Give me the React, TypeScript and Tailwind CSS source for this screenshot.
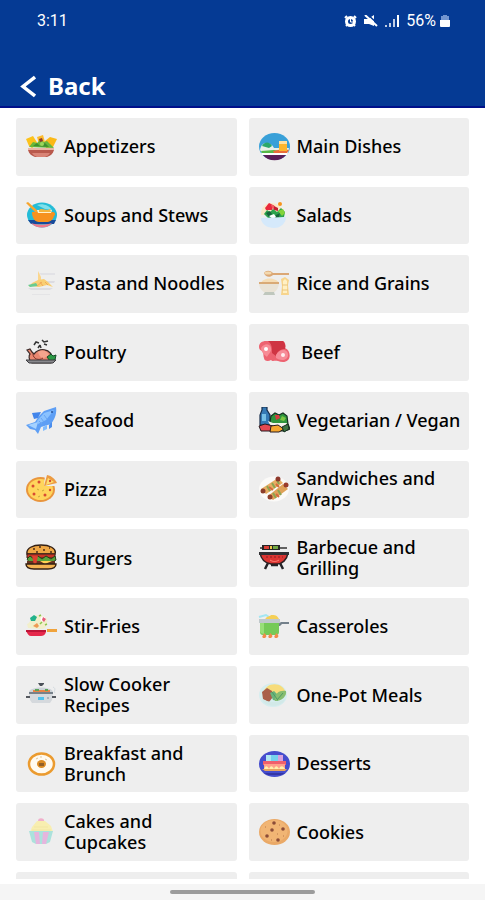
import React from "react";

interface Category {
    name: string;
    icon: React.ReactNode;
}

const CATEGORIES: Category[] = [
    {
        name: "Appetizers",
        icon: (
            <>
                <path d="M1 6l7-3 5 8-6 4-3-2z" fill="#fcc21b" />
                <path d="M12 4l6-2 2 7-6 2z" fill="#fdbb2d" />
                <path d="M20 8l5-4 7 2-4 8-7 1z" fill="#fbb917" />
                <path d="M4 14l4-5 4 1 3-3 4 2 3-1 3 3 4 4z" fill="#69b73c" />
                <path d="M8 13l4-3 3 3 5-3 4 4z" fill="#3f8f2f" />
                <path d="M14 6l3-1 1 3-3 1z" fill="#8c3b2e" />
                <circle cx="17" cy="11" r="2" fill="#9bd65c" />
                <path d="M3 15h26v2H3z" fill="#e9b7a4" />
                <path d="M3 17h26c-1 4-4 6-7 7H10c-3-1-6-3-7-7z" fill="#b9594c" />
                <path d="M7 20h18c-1 2-3 3-5 4h-8c-2-1-4-2-5-4z" fill="#d98476" />
            </>
        ),
    },
    {
        name: "Main Dishes",
        icon: (
            <>
                <ellipse cx="16.5" cy="13.5" rx="15.5" ry="13.5" fill="#39a0d8" />
                <path d="M2 17c1-5 3-6 5-7 4 0 7 1 9 5h15l-1 5H4z" fill="#e8efe8" />
                <path d="M4 13c3-5 8-4 10 0l-3 2z" fill="#2ba86a" />
                <path d="M3 18l13-1 6 1-3 2H4z" fill="#55b848" />
                <path d="M15 18l10-2 6 1-2 3H16z" fill="#ea6c3a" />
                <path d="M21 8h8v10h-8z" fill="#fdb62b" />
                <path d="M21 8h8v3h-8z" fill="#ffe1a0" />
                <path d="M3 20h27l-1 2H4z" fill="#fff" />
                <path d="M5 22h23c-5 7-18 7-23 0z" fill="#5b1e58" />
            </>
        ),
    },
    {
        name: "Soups and Stews",
        icon: (
            <>
                <ellipse cx="17" cy="14" rx="15" ry="12.5" fill="#24bcd7" />
                <path d="M12 4c5-2 12 0 15 5l-7-1z" fill="#7fe0ea" />
                <path d="M3 19h28l-2 4H6z" fill="#174b9b" />
                <path d="M6 22c6 2 15 2 21 0-4 6-16 6-21 0z" fill="#f2788a" />
                <path d="M1 2l2-1 10 9-2 2z" fill="#f7a52c" />
                <path d="M7 11h21c2 0 3 3 1 4-1 4-4 6-8 6h-7c-4 0-7-4-7-10z" fill="#f6921e" />
                <path d="M12 9h15l-1 3H13z" fill="#fff3cd" />
                <path d="M14 9c3-3 7 2 11-1l1 3H14z" fill="#f4b53c" />
            </>
        ),
    },
    {
        name: "Salads",
        icon: (
            <>
                <path d="M3 14c0-8 4-11 9-12 8 0 13 4 15 12z" fill="#fbe7c6" />
                <path d="M7 7l4-5 4 2-1 5H8z" fill="#e9283c" />
                <path d="M13 4h3l1 3-2 2z" fill="#f15a60" />
                <circle cx="22" cy="3" r="2" fill="#f7941d" />
                <path d="M16 5l4 2v3l-4-1z" fill="#c61f2f" />
                <path d="M6 13l3-4 3 2 3-3 4 3 4-4 4 4-1 5-7 2-9-1z" fill="#2ba24c" />
                <path d="M8 12l4-2 2 3-3 3zm10 2l4-2-1 4-4 1z" fill="#17623a" />
                <path d="M20 10l5-2 2 4-3 3z" fill="#83d33a" />
                <path d="M11 15l5-2 2 3-3 2z" fill="#fff" />
                <path d="M3 17l25-1c0 6-5 11-12 11S3 23 3 17z" fill="#d5e9fb" />
            </>
        ),
    },
    {
        name: "Pasta and Noodles",
        icon: (
            <>
                <path d="M14 3h16v2H16z" fill="#e2e2e6" />
                <path d="M18 11h12l-1 2H19z" fill="#dcdce2" />
                <path d="M3 18h25l-3 2H6z" fill="#dddde1" />
                <path d="M7 24h18v1H7z" fill="#e4e4e6" />
                <path d="M13 1l3 6v8h-3z" fill="#fbd68d" />
                <path d="M7 13l6-3 6-1 4 3 5 5-6-2-8 2-7-1-3 1z" fill="#f9cf74" />
                <path d="M3 15l8-2 2 3-8 1z" fill="#69cb91" />
                <path d="M15 12l3 4M20 12l3 3M12 16l5-4" stroke="#f2a95a" fill="none" />
            </>
        ),
    },
    {
        name: "Rice and Grains",
        icon: (
            <>
                <path d="M6 3c2-3 6-3 9 0h16v2H15c-3 3-8 2-9-2z" fill="#dba775" />
                <ellipse cx="10" cy="3" rx="3.5" ry="1.5" fill="#f3d8ae" />
                <path d="M3 13c2-6 15-6 18 0z" fill="#f5ddb5" />
                <path d="M1 12h20c0 6-3 10-7 11H8c-5-2-7-6-7-11z" fill="#e9e3d6" />
                <path d="M1 12h20v2H1z" fill="#d9aa76" />
                <path d="M7 22h9l1 3H5z" fill="#bfc7bd" />
                <path d="M23 9l4-2 4 3-1 5 1 10h-8l1-9z" fill="#f7d48c" />
                <path d="M25 11l2-2 2 2v12h-4z" fill="#fff0c4" />
                <path d="M24 15h6M24 20h6" stroke="#e9c47c" />
            </>
        ),
    },
    {
        name: "Poultry",
        icon: (
            <>
                <path d="M9 7l2-3 3 1m-1 5l2-3m2-5l2 2 4-1m-8 4l1 3m3-4l3 1" stroke="#333" strokeWidth="1.5" fill="none" />
                <path d="M2 12l3-1 2 3 2 2c5-6 17-7 19 6l-2 3H7c-4-3-3-8-2-9z" fill="#e98770" stroke="#3b2a28" strokeWidth="1.2" />
                <path d="M13 14c5-3 9-1 11 3l-5 3c-3 0-5-2-6-6z" fill="#f4a48d" />
                <path d="M8 16c0 5 6 7 10 4" stroke="#7f352b" fill="none" />
                <path d="M22 19l4-3 2 2 3-1-1 5-5 1z" fill="#2b9a45" stroke="#164d29" />
                <path d="M1 22h30l-3 3H4z" fill="#88888c" stroke="#3c3c40" />
            </>
        ),
    },
    {
        name: "\u00a0Beef",
        icon: (
            <>
                <path d="M1 9c0-4 3-6 7-6h17c2 1 3 4 2 7 5 2 6 9 3 12-3 3-7 2-10 1-4-1-5 1-7-1-3 2-7 1-7-2-1-3 0-5-2-7-2-1-3-2-3-4z" fill="#ed6371" />
                <path d="M10 3h15c2 2 3 5 2 8-5 0-7 2-9 7l-4-3c0-5 0-9-4-12z" fill="#cf3443" />
                <path d="M3 10c3-5 9-5 10 0 1 4-3 6-4 9-4-3-6-6-6-9z" fill="#f78b95" />
                <path d="M18 17c3-6 12-7 12 0 0 6-8 6-12 3z" fill="#f68c98" />
                <circle cx="8" cy="11" r="2" fill="#fff" />
                <circle cx="25" cy="17" r="2" fill="#ffecee" />
            </>
        ),
    },
    {
        name: "Seafood",
        icon: (
            <>
                <path d="M1 18l9-3 4-6 5-5 12-4c1 6-1 12-5 17l-10 3-3 7-3-4-5-1z" fill="#5e9ff5" />
                <path d="M7 6l9-1-3 6-4 1z" fill="#4285eb" />
                <path d="M18 20l4-2v4l-4 2z" fill="#80bcff" />
                <path d="M24 18l3-3v5l-3 2z" fill="#4b8eed" />
                <path d="M12 14l7-8 10-3-8 10-8 4z" fill="#8ac2ff" />
                <path d="M3 18l10-3-2 7z" fill="#a5d2ff" />
                <path d="M14 14l3 3m-1-6l3 4m0-7l3 4" stroke="#6aa5f0" fill="none" />
                <circle cx="27" cy="5" r="1" fill="#26539d" />
            </>
        ),
    },
    {
        name: "Vegetarian / Vegan",
        icon: (
            <>
                <path d="M4 0h5v3l3 5v10H2V8l2-5z" fill="#3479b5" stroke="#172e4b" strokeWidth="1.2" />
                <path d="M4 7h4v7H4z" fill="#76bfe6" />
                <path d="M12 15l1-6 4-3 4 2 4-2 4 3 1 8 2 5-5 2H13z" fill="#2e953c" stroke="#152f20" strokeWidth="1.2" />
                <path d="M17 8h4l1 3-4 2z" fill="#d63b40" />
                <path d="M24 9l4 2-2 3-4-1z" fill="#7cc642" />
                <path d="M10 14l5 2h14l-3 6H14z" fill="#f3f4ee" />
                <path d="M1 19l6-2 8 2v5H3z" fill="#e44951" stroke="#271b20" />
                <path d="M13 19l7-1 6 4-5 3h-9z" fill="#f5a72e" stroke="#271b20" />
                <path d="M24 20l6-3 1 5-5 3z" fill="#3c7544" stroke="#172e20" />
            </>
        ),
    },
    {
        name: "Pizza",
        icon: (
            <>
                <ellipse cx="15.5" cy="14.5" rx="14.5" ry="12.5" fill="#e9953d" />
                <ellipse cx="15.5" cy="14.5" rx="12.5" ry="10.5" fill="#ffd55c" />
                <path d="M19 11L20 0l12 2v9z" fill="#eee" />
                <path d="M22 0c5 1 8 4 10 8l-13 3z" fill="#ec9b42" />
                <path d="M23 3l6 4-8 3z" fill="#ffe170" />
                <g fill="#d94b32">
                    <circle cx="8" cy="11" r="1.5" />
                    <circle cx="14" cy="7" r="1.5" />
                    <circle cx="9" cy="19" r="1.5" />
                    <circle cx="20" cy="20" r="1.5" />
                    <circle cx="25" cy="6" r="1.2" />
                    <circle cx="25" cy="15" r="1.2" />
                </g>
                <path d="M12 14l2 1m3 1l2-1m-6 7l2-1" stroke="#c9a63d" />
            </>
        ),
    },
    {
        name: "Sandwiches and Wraps",
        icon: (
            <>
                <ellipse cx="16" cy="14" rx="15" ry="12.5" fill="#fbfaf8" />
                <path d="M3 14L20 3l5 5L8 19z" fill="#e7ad63" />
                <path d="M10 21L25 9l5 5-15 11z" fill="#dfa258" />
                <path d="M9 11l3 5m2-8l3 5m2-8l2 4m-6 9l3 5m2-8l3 5" stroke="#8ba552" strokeWidth="2" />
                <path d="M11 12l4 3m3-6l3 3m-3 7l3 3" stroke="#d46b3d" strokeWidth="2" />
                <circle cx="5" cy="16" r="2.5" fill="#8c3e2b" />
                <circle cx="20" cy="4" r="2.5" fill="#8e392c" />
                <circle cx="12" cy="22" r="2.5" fill="#8f402b" />
                <circle cx="28" cy="10" r="2.5" fill="#993b2b" />
            </>
        ),
    },
    {
        name: "Burgers",
        icon: (
            <>
                <path d="M2 10C1 4 8 1 16 1s16 3 14 9z" fill="#efa744" stroke="#332015" strokeWidth="1.4" />
                <path d="M8 5h2m4-2h2m2 3h2m4-2h1m0 4h2M11 8h2" stroke="#4b2d19" strokeWidth="1.5" />
                <path d="M2 10h28v4H2z" fill="#c83425" stroke="#3b211b" />
                <path d="M2 15l3-3 4 3 4-3 4 3 4-3 5 3 4-3 1 4-3 2H4z" fill="#59a33a" stroke="#213e1b" />
                <path d="M2 17h28v3H2z" fill="#66331f" />
                <path d="M7 12h6l-2 9H9z" fill="#dc3f2f" />
                <path d="M15 17h12l-7 3z" fill="#ffd153" />
                <path d="M1 20h30c0 4-4 5-8 5H9c-4 0-8-1-8-5z" fill="#f3b452" stroke="#332015" strokeWidth="1.4" />
            </>
        ),
    },
    {
        name: "Barbecue and Grilling",
        icon: (
            <>
                <path d="M2 4h27" stroke="#333" strokeWidth="1.5" />
                <path d="M4 1h18v5H4z" fill="#252525" />
                <path d="M6 2h5v3H6z" fill="#db3f36" />
                <path d="M12 2h2v3h-2z" fill="#edc849" />
                <path d="M15 2h5v3h-5z" fill="#71a844" />
                <path d="M10 19L7 25m15-6l3 6M13 21h7" stroke="#242428" strokeWidth="2.5" />
                <path d="M2 9h28c-1 7-6 11-11 11h-6C7 19 3 15 2 9z" fill="#db3532" stroke="#2d2022" strokeWidth="1.5" />
                <path d="M1 8h30v3H1z" fill="#303034" />
                <path d="M8 13h17" stroke="#8c1e24" strokeDasharray="2 2" />
                <path d="M12 16c3 2 6 2 9 0" stroke="#ff8175" fill="none" />
            </>
        ),
    },
    {
        name: "Stir-Fries",
        icon: (
            <>
                <path d="M2 11c4-1 3-6 7-8 5-2 11 0 13 3 1 5-1 10-6 10L3 15z" fill="#f2efcb" />
                <path d="M5 5l4-3 3 2-2 4H6z" fill="#22b28b" />
                <circle cx="18" cy="6" r="2.5" fill="#fff" />
                <path d="M18 4l3 2-2 3-2-2z" fill="#e65978" />
                <path d="M8 13l4-3 2 3-2 2z" fill="#ee9b55" />
                <path d="M14 3l2-1m-1 9l2-2m3 3l2-1" stroke="#8fc651" strokeWidth="1.5" />
                <path d="M1 17h20v2c-1 3-3 4-5 4H6c-2 0-4-2-5-6z" fill="#e5284b" />
                <path d="M1 17h20v2H1z" fill="#bd1538" />
                <path d="M22 16h10v3H22z" fill="#f0a33b" />
            </>
        ),
    },
    {
        name: "Casseroles",
        icon: (
            <>
                <path d="M1 4l7-2 3 2" stroke="#a3e6f2" strokeWidth="2" fill="none" />
                <path d="M7 7c1-4 4-3 6-5 4 0 6 0 8 4l1 3H7z" fill="#f5cf55" />
                <path d="M20 11l3-2h8v2h-7l-2 2h-2z" fill="#73808a" />
                <path d="M1 6h21v4H1z" fill="#bfc8cb" />
                <path d="M2 10h19v9c0 2-1 3-3 3H5c-2 0-3-1-3-3z" fill="#75ca57" />
                <path d="M2 10h4v11c-2 0-4-1-4-3z" fill="#98df78" />
                <path d="M5 25c-2-2 1-3 1-5 3 2 3 4 1 5m4 0c-2-2 1-3 1-5 3 2 3 4 1 5m4 0c-2-2 1-3 1-5 3 2 3 4 1 5" fill="#f28b4b" />
            </>
        ),
    },
    {
        name: "Slow Cooker Recipes",
        icon: (
            <>
                <path d="M13 2h6v1l-2 2h-2z" fill="#4b5158" />
                <path d="M4 11C5 5 27 5 28 11z" fill="#cdd3d8" />
                <path d="M8 10h17" stroke="#e78348" strokeWidth="2" />
                <path d="M10 9h4m6 0h3" stroke="#5ca35b" strokeWidth="2" />
                <path d="M4 11h24v2H4z" fill="#77818a" />
                <path d="M4 13h24l-1 6-2 3H7l-2-3z" fill="#d5d9dd" />
                <path d="M1 16h4m22 0h4" stroke="#54585e" strokeWidth="2" />
                <path d="M13 16h6v3h-6z" fill="#4ec2ee" />
                <circle cx="23" cy="17" r="1" fill="#9ea7af" />
                <path d="M28 6c4 2 0 4 2 6" stroke="#d4dbe0" fill="none" />
            </>
        ),
    },
    {
        name: "One-Pot Meals",
        icon: (
            <>
                <ellipse cx="15" cy="14" rx="14" ry="12" fill="#d6edef" />
                <path d="M5 13c2-13 21-13 23 0l-8 6z" fill="#f7dc7a" />
                <path d="M4 11l5-4 5 3 1 6-4 5-6-3z" fill="#a9604b" />
                <path d="M12 12l4-2 5 5-1 5-5-1z" fill="#69b37b" />
                <path d="M17 20c-1-8 5-11 11-10 1 5-4 10-11 10z" fill="#87bd70" />
                <path d="M14 11l5 7m0 1l6-7" stroke="#4e9a63" fill="none" />
                <path d="M4 18c6 4 17 4 23 0-2 9-21 9-23 0z" fill="#d2e9e8" />
            </>
        ),
    },
    {
        name: "Breakfast and Brunch",
        icon: (
            <>
                <ellipse cx="16.5" cy="14" rx="12.5" ry="10.5" fill="#fffaf0" stroke="#eb9b2f" strokeWidth="2.5" />
                <ellipse cx="16.5" cy="14" rx="4.5" ry="4" fill="#dc8c24" />
                <path d="M14 13h5v3h-5z" fill="#936027" />
                <path d="M11 9l2-1m2-1h2m3 2l2 1" stroke="#dfc79d" />
            </>
        ),
    },
    {
        name: "Desserts",
        icon: (
            <>
                <ellipse cx="16.5" cy="14" rx="15.5" ry="13" fill="#454dcd" />
                <path d="M8 5h17v6H8z" fill="#76d2ed" />
                <path d="M8 5h5v6H8z" fill="#b0e7f2" />
                <path d="M20 5h5v6h-5z" fill="#d8a1de" />
                <path d="M5 11h23v4H5z" fill="#f05f6c" />
                <path d="M6 14h21v6H6z" fill="#ff9f8a" />
                <path d="M6 19c2-5 4-2 5 0 2-5 4-2 5 0 2-5 4-2 5 0 2-5 5-2 6 0z" fill="#fff0ac" />
                <path d="M4 19h25l-2 2H7z" fill="#e7a460" />
                <path d="M6 23h21l-4 2H10z" fill="#3436a4" />
            </>
        ),
    },
    {
        name: "Cakes and Cupcakes",
        icon: (
            <>
                <path d="M13 3c0-4 7-3 6 0z" fill="#f1afcb" />
                <path d="M7 9l5-6h8l6 5 2 6H5z" fill="#f8eeb0" />
                <path d="M9 9h14M7 12h19" stroke="#f1e6a4" />
                <path d="M4 13h24l-3 11-4 2H11l-4-2z" fill="#abe2dc" />
                <path d="M9 14h5l1 12h-4zm9 0h6l-3 12h-4z" fill="#e6b5dd" />
            </>
        ),
    },
    {
        name: "Cookies",
        icon: (
            <>
                <ellipse cx="16.5" cy="14" rx="15.5" ry="13" fill="#eaa967" />
                <ellipse cx="16" cy="13" rx="13.5" ry="11" fill="#f1b574" />
                <g fill="#8c4d38">
                    <circle cx="16" cy="5" r="1.8" />
                    <circle cx="14" cy="12" r="1.8" />
                    <circle cx="25" cy="11" r="1.8" />
                    <circle cx="9" cy="18" r="1.8" />
                    <circle cx="20" cy="22" r="1.8" />
                </g>
                <path d="M7 9h1m13-2h1m-3 9h1m5 2h1m-13 4h1" stroke="#b9784a" />
            </>
        ),
    },
];

export default function App() {
    return (
        <div className="flex min-h-screen flex-col bg-white font-['Noto_Sans',sans-serif] text-black">
            <header className="flex h-[108px] flex-col justify-between border-b-2 border-[#00108a] bg-[#053a94] text-white">
                <StatusBar />
                <button type="button" className="flex items-center gap-3 self-start pb-1 pl-5">
                    <svg className="h-6 w-4" viewBox="0 0 16 24" fill="none" stroke="currentColor" strokeWidth="3.5" aria-hidden="true">
                        <path d="M15 3L3 12.5 15 22" />
                    </svg>
                    <span className="text-2xl leading-8 font-bold">Back</span>
                </button>
            </header>

            <main className="grid flex-1 grid-cols-2 grid-rows-[repeat(11,minmax(56px,1fr))_7px] gap-x-3 gap-y-[11px] px-4 pt-[10px]">
                {CATEGORIES.map((category) => (
                    <CategoryCard key={category.name} category={category} />
                ))}
                {/* top edge of the next row */}
                <div className="rounded-t-[3px] bg-[#eee]" />
                <div className="rounded-t-[3px] bg-[#eee]" />
            </main>

            <footer className="mt-[5px] flex h-4 items-center justify-center bg-[#f5f5f5]">
                <div className="h-1 w-[30%] rounded-full bg-[#9c9c9c]" />
            </footer>
        </div>
    );
}

function CategoryCard({ category }: { category: Category }) {
    return (
        <button type="button" className="flex items-center gap-[7px] rounded-[3px] bg-[#eee] pl-[9px] text-left">
            <svg className="h-7 w-8 shrink-0" viewBox="0 0 32 28" aria-hidden="true">
                {category.icon}
            </svg>
            <span className="text-[18px] leading-[21px] font-medium">{category.name}</span>
        </button>
    );
}

function StatusBar() {
    return (
        <div className="flex items-center justify-between pt-[11px] pr-[35px] pl-[37px] font-[Roboto,sans-serif] text-base leading-5">
            <span>3:11</span>
            <div className="flex items-center gap-[7px]">
                <svg className="h-3 w-[13px]" viewBox="0 0 13 12" fill="none" stroke="currentColor" aria-hidden="true">
                    <circle cx="6.5" cy="6.5" r="4" strokeWidth="3" />
                    <path d="M1 3l2-2m7 0l2 2M3 10l-1 1m8-1l1 1" strokeWidth="2" />
                    <path d="M6.5 4v3H9" />
                </svg>
                <svg className="h-3 w-[14px]" viewBox="0 0 14 12" aria-hidden="true">
                    <path d="M0 4h4l6-4v11L5 9H0z" fill="currentColor" />
                    <path d="M3 -1l11 10" stroke="#053a94" strokeWidth="1.5" />
                    <path d="M1 0l12 11" stroke="currentColor" strokeWidth="2" />
                </svg>
                <svg className="h-3 w-[14px]" viewBox="0 0 14 12" stroke="currentColor" strokeWidth="2" aria-hidden="true">
                    <path d="M1 10v2m4-4v4m4-8v8" opacity=".75" />
                    <path d="M13 0v12" />
                </svg>
                <div className="flex items-center gap-1">
                    <span>56%</span>
                    <svg className="h-3 w-[10px]" viewBox="0 0 10 12" aria-hidden="true">
                        <path d="M3 0h4v1h2v5H1V1h2z" fill="#7395d0" />
                        <path d="M0 5h10v6q0 1-1 1H1q-1 0-1-1z" fill="currentColor" />
                    </svg>
                </div>
            </div>
        </div>
    );
}
